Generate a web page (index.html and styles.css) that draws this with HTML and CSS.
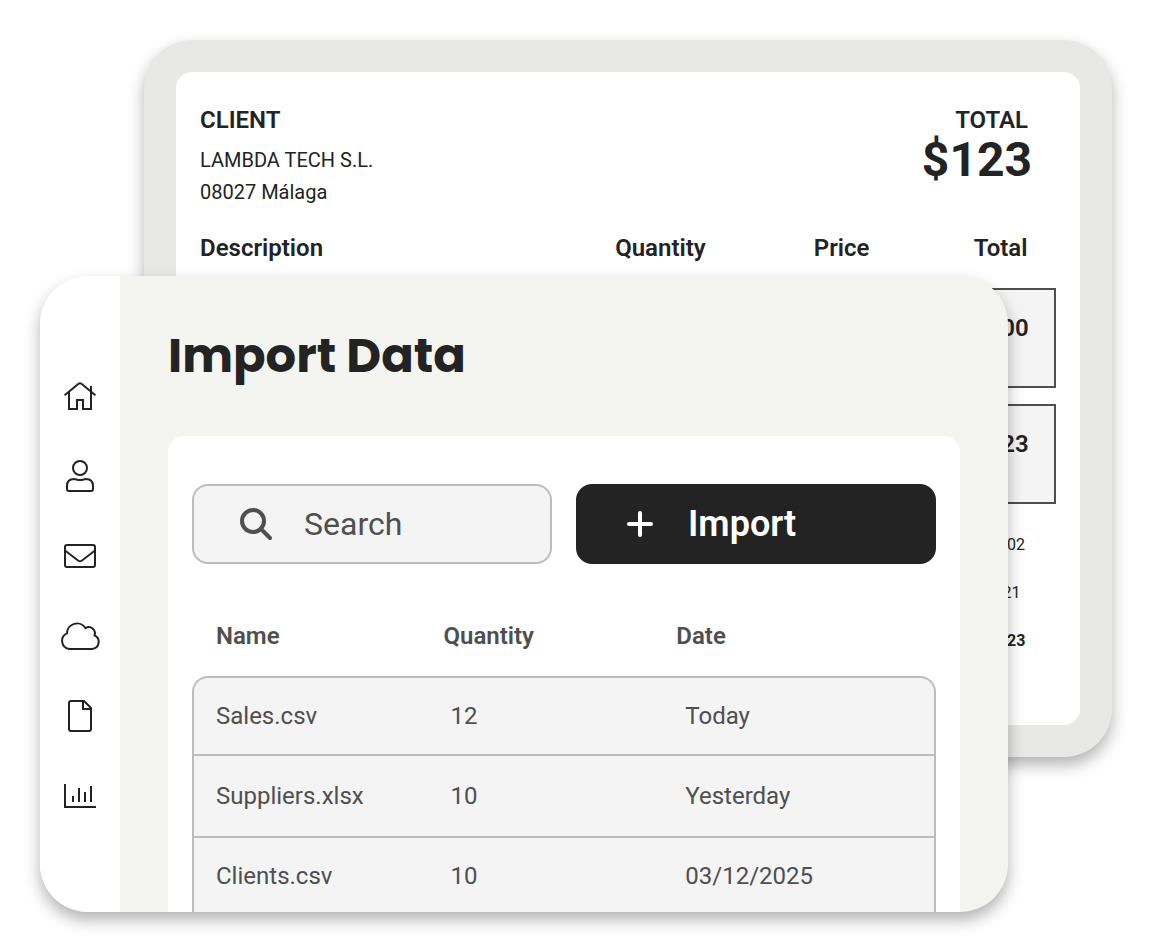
FILE: index.html
```
<!DOCTYPE html>
<html lang="en">
<head>
<meta charset="utf-8"/>
<meta name="viewport" content="width=device-width, initial-scale=1.0"/>
<title>Import Data</title>
<link rel="stylesheet" href="styles.css">
</head>
<body>
  <div class="stage">
    <section class="window invoice">
      <div class="sheet">
        <header class="invoice-header">
          <div class="client">
            <h2>CLIENT</h2>
            <p>LAMBDA TECH S.L.</p>
            <p>08027 Málaga</p>
          </div>
          <div class="grand-total">
            <h2>TOTAL</h2>
            <strong>$123</strong>
          </div>
        </header>
        <table class="lines">
          <thead>
            <tr>
              <th class="col-description">Description</th>
              <th class="col-quantity">Quantity</th>
              <th class="col-price">Price</th>
              <th>Total</th>
            </tr>
          </thead>
          <tbody>
            <tr><td></td><td></td><td></td><td>$100</td></tr>
            <tr><td></td><td></td><td></td><td>$123</td></tr>
          </tbody>
        </table>
        <div class="summary">
          <span>$102</span>
          <span>$21</span>
          <strong>$123</strong>
        </div>
      </div>
    </section>

    <section class="window app">
      <nav class="sidebar">
        <a href="#" aria-label="Home">
          <svg viewBox="0 0 40 40"><path d="M4.6 19.2L18.8 7.6q1.2-.9 2.4 0L35.4 19.2M9 16v17h8v-9h6v9h8V10"/></svg>
        </a>
        <a href="#" aria-label="Contacts">
          <svg viewBox="0 0 40 40"><circle cx="20" cy="12" r="7"/><path d="M7 33v-3q0-7 7-7c2 0 3 1 6 1s4-1 6-1q7 0 7 7v3q0 2-2 2H9q-2 0-2-2z"/></svg>
        </a>
        <a href="#" aria-label="Mail">
          <svg viewBox="0 0 40 40"><rect x="5" y="9" width="30" height="22" rx="2"/><path d="M5 14.5l13 10q2 1.4 4 0l13-10"/></svg>
        </a>
        <a href="#" aria-label="Cloud">
          <svg viewBox="0 0 40 40"><path d="M9 33A8.2 8.2 0 0 1 7 17.4A10 10 0 0 1 25.5 12.2A6 6 0 0 1 34.5 19.3A7.2 7.2 0 0 1 32 33z"/></svg>
        </a>
        <a href="#" aria-label="Documents">
          <svg viewBox="0 0 40 40"><path d="M11 5h13l7 7v21q0 2-2 2H11q-2 0-2-2V7q0-2 2-2zM23 5v8h8"/></svg>
        </a>
        <a href="#" aria-label="Reports">
          <svg viewBox="0 0 40 40"><path d="M5 8v23h31M13 26v-6M19 26V12M25 26V16M31 26V10"/></svg>
        </a>
      </nav>
      <main class="content">
        <h1>Import Data</h1>
        <div class="card">
          <div class="actions">
            <label class="search">
              <svg viewBox="0 0 32 32"><circle cx="13" cy="13" r="11"/><path d="M21 21l9 9"/></svg>
              <input type="search" placeholder="Search" aria-label="Search">
            </label>
            <button class="import-button" type="button">
              <svg viewBox="0 0 32 32"><path d="M16 5v22M5 16h22"/></svg>
              Import
            </button>
          </div>
          <table class="files">
            <thead>
              <tr>
                <th class="col-name">Name</th>
                <th class="col-count">Quantity</th>
                <th>Date</th>
              </tr>
            </thead>
            <tbody>
              <tr><td>Sales.csv</td><td>12</td><td>Today</td></tr>
              <tr><td>Suppliers.xlsx</td><td>10</td><td>Yesterday</td></tr>
              <tr><td>Clients.csv</td><td>10</td><td>03/12/2025</td></tr>
            </tbody>
          </table>
        </div>
      </main>
    </section>
  </div>
</body>
</html>
```
FILE: styles.css
```
* {
  box-sizing: border-box;
}
body {
  margin: 0;
  background: #fff;
  color: #232323;
  font-family: Roboto, "Liberation Sans", sans-serif;
  font-size: 24px;
  line-height: 32px;
}
h1, h2, p {
  margin: 0;
}
table {
  width: 100%;
  border-collapse: separate;
  table-layout: fixed;
}
th, td {
  padding: 0;
  text-align: left;
}
svg {
  fill: none;
  stroke: currentColor;
  flex-shrink: 0;
}

/* both windows share one grid cell, the margins offset them */
.stage {
  display: grid;
  padding: 40px;
}
.window {
  grid-area: 1 / 1;
  align-self: start;
  border-radius: 48px;
  box-shadow: 0 8px 16px rgba(0,0,0,0.3);
}

/* invoice */
.invoice {
  margin-left: 104px;
  padding: 32px;
  background: #e8e8e6;
}
.sheet {
  padding: 32px 24px 68px;
  border-radius: 16px;
  background: #fff;
}
.invoice-header {
  display: flex;
  justify-content: space-between;
  padding-right: 24px;
}
h2 {
  font-size: 24px;
  font-weight: 600;
}
.client h2 {
  margin-bottom: 8px;
}
.client p {
  font-size: 20px;
}
.grand-total {
  text-align: right;
}
.grand-total h2 {
  padding-right: 4px;
}
.grand-total strong {
  display: block;
  font-size: 48px;
  line-height: 48px;
}
.lines {
  margin-top: 8px;
  border-spacing: 0 16px;
}
.lines th {
  padding-bottom: 8px;
  font-weight: 600;
}
.col-description {
  width: 48.5%;
}
.col-quantity {
  width: 23.2%;
}
.col-price {
  width: 18.7%;
}
.lines td {
  height: 100px;
  padding-top: 22px;
  vertical-align: top;
  background: #f4f4f4;
  border: solid #4f4f4f;
  border-width: 2px 0;
  font-weight: 600;
}
.lines td:first-child {
  border-left-width: 2px;
}
.lines td:last-child {
  border-right-width: 2px;
}
.summary {
  display: flex;
  flex-direction: column;
  gap: 16px;
  width: 42px;
  margin: 9px 28px 0 auto;
  font-size: 16px;
  text-align: center;
}

/* import window */
.app {
  display: flex;
  margin: 236px 104px 0 0;
  overflow: hidden;
  background: #f4f5f1;
}
.sidebar {
  display: flex;
  flex-direction: column;
  width: 80px;
  padding-top: 80px;
  background: #fff;
}
.sidebar a {
  display: flex;
  align-items: center;
  justify-content: center;
  height: 80px;
  color: #232323;
}
.sidebar svg {
  width: 40px;
  height: 40px;
  stroke-width: 2;
}
.content {
  flex: 1;
  padding: 48px 48px 0;
}
h1 {
  margin-bottom: 48px;
  font-family: Poppins, Inter, sans-serif;
  font-size: 48px;
  font-weight: 700;
  line-height: 64px;
}
.card {
  padding: 48px 24px 0;
  border-radius: 16px 16px 0 0;
  background: #fff;
}
.actions {
  display: grid;
  grid-template-columns: 1fr 1fr;
  gap: 24px;
  margin-bottom: 56px;
}
.search, .import-button {
  display: flex;
  align-items: center;
  gap: 32px;
  height: 80px;
  padding: 0 46px;
  border: 2px solid #bdbdbd;
  border-radius: 16px;
  font-size: 32px;
}
.search {
  background: #f4f4f4;
  color: #4f4f4f;
}
.search svg, .import-button svg {
  width: 32px;
  height: 32px;
  stroke-width: 4;
  stroke-linecap: round;
}
.search input {
  width: 100%;
  min-width: 0;
  padding: 0;
  border: none;
  outline: none;
  background: none;
  color: inherit;
  font: inherit;
}
.search input::placeholder {
  color: #4f4f4f;
}
.import-button {
  border-color: #232323;
  background: #232323;
  color: #fff;
  font-family: inherit;
  font-size: 36px;
  font-weight: 600;
  cursor: pointer;
}
.files {
  border-spacing: 0;
  color: #4f4f4f;
}
.files th {
  padding-bottom: 24px;
  font-weight: 600;
}
.files th:first-child {
  padding-left: 24px;
}
.col-name {
  width: 33.8%;
}
.col-count {
  width: 31.3%;
}
.files td {
  padding: 22px 0 20px 7px;
  background: #f4f4f4;
  border: 0 solid #bdbdbd;
}
.files td:first-child {
  padding-left: 22px;
  border-left-width: 2px;
}
.files td:last-child {
  padding-left: 9px;
  border-right-width: 2px;
}
.files tr:nth-child(1) td {
  padding-bottom: 22px;
  border-top-width: 2px;
  border-bottom-width: 2px;
}
.files tr:nth-child(2) td {
  padding-top: 24px;
  padding-bottom: 24px;
  border-bottom-width: 2px;
}
.files tr:first-child td:first-child {
  border-top-left-radius: 16px;
}
.files tr:first-child td:last-child {
  border-top-right-radius: 16px;
}
```
